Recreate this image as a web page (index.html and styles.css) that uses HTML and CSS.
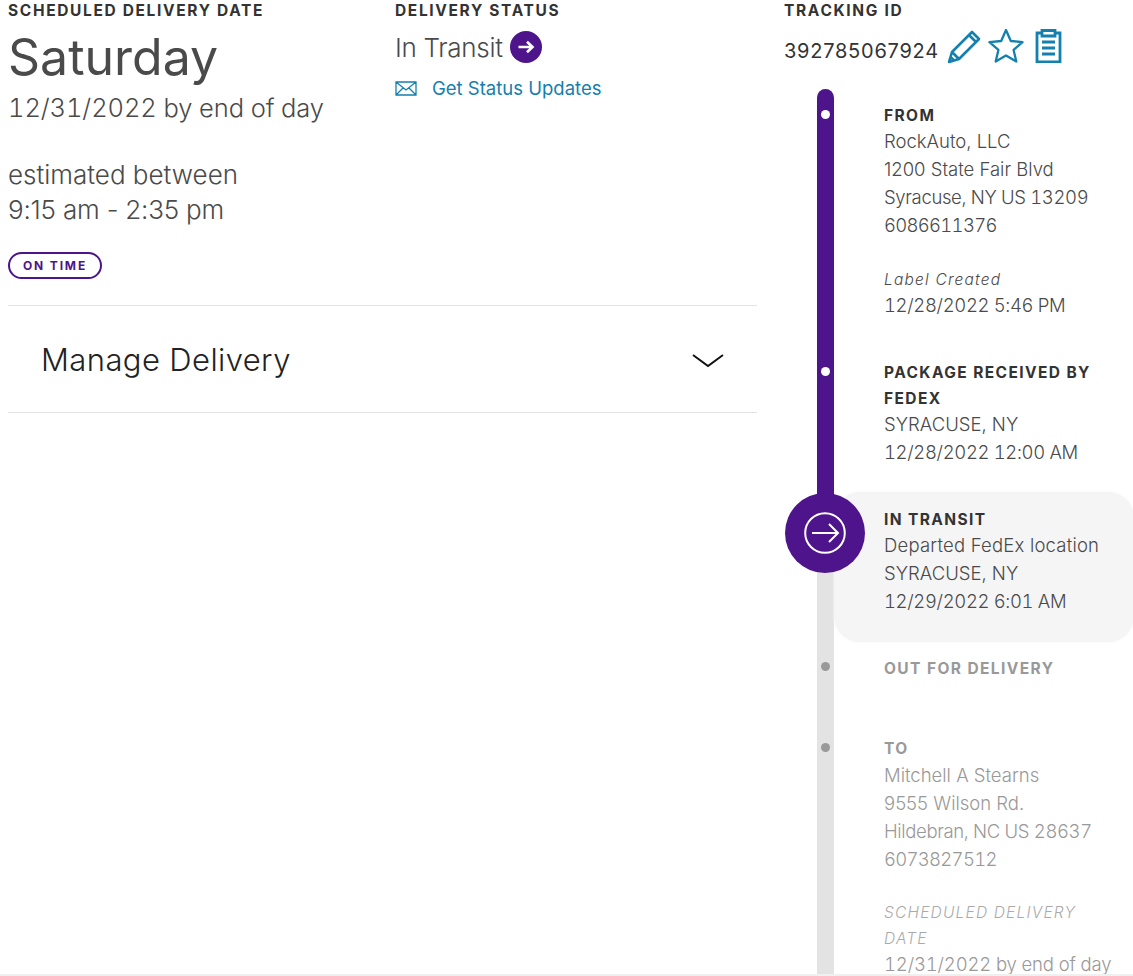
FILE: index.html
```html
<!DOCTYPE html>
<html lang="en">
<head>
<meta charset="utf-8">
<title>Tracking</title>
<link rel="stylesheet" href="styles.css">
</head>
<body>
<main class="page">
  <section class="summary">
    <div class="summary-top">
      <div class="col-date">
        <h2 class="label">SCHEDULED DELIVERY DATE</h2>
        <div class="day">Saturday</div>
        <div class="date">12/31/2022 by end of day</div>
        <div class="estimate">estimated between<br><span class="times">9:15 am - 2:35 pm</span></div>
        <span class="pill">ON TIME</span>
      </div>
      <div class="col-status">
        <h2 class="label">DELIVERY STATUS</h2>
        <div class="status-row">
          <span class="status-text">In Transit</span>
          <svg class="status-icon" viewBox="0 0 32 32"><circle cx="16" cy="16" r="16" fill="#4d148c"/><path d="M8.500 16H22M17 10.800L22.500 16L17 21.200" fill="none" stroke="#fff" stroke-width="2.600"/></svg>
        </div>
        <a class="updates" href="#">
          <svg class="mail" viewBox="0 0 22 15"><path d="M1 1h20v13H1zM1 1l10 8 10-8M1 14l7.500-7.500M21 14l-7.500-7.500" fill="none" stroke="#1380ad" stroke-width="1.300"/></svg>
          <span>Get Status Updates</span>
        </a>
      </div>
    </div>
    <div class="manage">
      <span>Manage Delivery</span>
      <svg class="chevron" viewBox="0 0 32 14"><path d="M1 1l15 11L31 1" fill="none" stroke="#111" stroke-width="2"/></svg>
    </div>
  </section>

  <aside class="tracking">
    <h2 class="label">TRACKING ID</h2>
    <div class="id-row">
      <span class="id">392785067924</span>
      <svg class="tool pencil" viewBox="0 0 36 36"><path d="M2 34l3-10L25 4l7 7-20 20zM5 24l7 7M22 7l7 7M3.500 29l3.500 3.500" fill="none" stroke="#1380ad" stroke-width="2.600" stroke-linejoin="round"/></svg>
      <svg class="tool star" viewBox="0 0 36 36"><path d="M18 2l4.800 11 11.700 1.100-8.900 7.800 2.700 11.600L18 27.400 7.700 33.500l2.700-11.600-8.900-7.800L13.200 13z" fill="none" stroke="#1380ad" stroke-width="2.300" stroke-linejoin="round"/></svg>
      <svg class="tool clip" viewBox="0 0 27 34"><path d="M7 4H2v29h23V4h-5M7 1.500h13V7H7zM7 13h13M7 19h13M7 25h13" fill="none" stroke="#1380ad" stroke-width="2.800"/></svg>
    </div>
    <div class="timeline">
      <div class="rail"><div class="rail-done"></div></div>
      <div class="step step-from">
        <i class="dot"></i>
        <h3 class="step-title">FROM</h3>
        <p>RockAuto, LLC</p><p>1200 State Fair Blvd</p><p class="num">Syracuse, NY US 13209</p><p class="num phone">6086611376</p>
        <h4 class="step-note">Label Created</h4>
        <p class="num">12/28/2022 5:46 PM</p>
      </div>
      <div class="step step-received">
        <i class="dot"></i>
        <h3 class="step-title">PACKAGE RECEIVED BY FEDEX</h3>
        <p>SYRACUSE, NY</p><p class="num">12/28/2022 12:00 AM</p>
      </div>
      <div class="step step-current">
        <span class="big-dot"><svg viewBox="0 0 42 42"><circle cx="21" cy="21" r="19.800" fill="none" stroke="#fff" stroke-width="2"/><path d="M8 21h26M25 12l9 9-9 9" fill="none" stroke="#fff" stroke-width="2"/></svg></span>
        <h3 class="step-title">IN TRANSIT</h3>
        <p class="wide">Departed FedEx location</p><p>SYRACUSE, NY</p><p class="num">12/29/2022 6:01 AM</p>
      </div>
      <div class="step step-out future">
        <i class="dot"></i>
        <h3 class="step-title">OUT FOR DELIVERY</h3>
      </div>
      <div class="step step-to future">
        <i class="dot"></i>
        <h3 class="step-title">TO</h3>
        <p>Mitchell A Stearns</p><p>9555 Wilson Rd.</p><p class="num">Hildebran, NC US 28637</p><p class="num phone">6073827512</p>
        <h4 class="step-note">SCHEDULED DELIVERY DATE</h4>
        <p class="num last">12/31/2022 by end of day</p>
      </div>
    </div>
  </aside>
</main>
<div class="bottom-edge"></div>
</body>
</html>
```
FILE: styles.css
```css
* { box-sizing: border-box; }
html, body { height: 976px; overflow: hidden; }
body {
  margin: 0;
  background: #fff;
  color: #333;
  font-family: Inter, "Liberation Sans", sans-serif;
  font-weight: 300;
}
.page { display: flex; padding: 0 0 0 8px; }
.summary { width: 749px; flex: none; }
.summary-top { display: flex; height: 306px; border-bottom: 1px solid #e3e3e3; }
.col-date { width: 387px; flex: none; }
.label {
  margin: 0;
  height: 21px;
  font-size: 15.500px;
  line-height: 21px;
  font-weight: 700;
  letter-spacing: 1.650px;
  color: #333;
}
.day { font-size: 50px; line-height: 60px; margin-top: 6px; color: #4a4a4a; font-weight: 400; }
.date { font-size: 25.500px; line-height: 40px; margin-top: 1px; color: #4a4a4a; letter-spacing: -0.100px; font-variant-numeric: tabular-nums; }
.estimate { font-size: 26px; line-height: 35px; margin-top: 29px; color: #4a4a4a; }
.times { letter-spacing: -0.200px; }
.pill {
  display: inline-flex;
  align-items: center;
  margin-top: 25px;
  height: 27px;
  padding: 0 13px;
  border: 2px solid #4d148c;
  border-radius: 14px;
  color: #4d148c;
  font-size: 12px;
  font-weight: 700;
  letter-spacing: 1.850px;
}
.status-row { display: flex; align-items: center; height: 34px; gap: 7px; margin-top: 9px; }
.status-text { font-size: 26px; color: #4a4a4a; letter-spacing: -0.300px; }
.status-icon { width: 32px; height: 32px; flex: none; }
.updates { display: flex; align-items: center; gap: 15px; margin-top: 10px; color: #1380ad; font-size: 18.500px; line-height: 28px; text-decoration: none; font-weight: 400; }
.mail { width: 22px; height: 15px; flex: none; }
.manage { display: flex; justify-content: space-between; align-items: center; height: 107px; padding: 0 33px; border-bottom: 1px solid #e3e3e3; font-size: 31px; color: #222; letter-spacing: 0.400px; }
.chevron { width: 32px; height: 14px; margin-top: 4px; }
.tracking { margin-left: 27px; width: 349px; flex: none; }
.id-row { display: flex; align-items: center; height: 48px; margin-top: 1px; }
.id { font-size: 20px; letter-spacing: 0.750px; color: #333; font-weight: 400; margin-right: 8px; padding-top: 10px; }
.tool { flex: none; }
.pencil { width: 36px; height: 36px; }
.star { width: 36px; height: 36px; margin-left: 5px; }
.clip { width: 27px; height: 34px; margin-left: 11px; }
.timeline { position: relative; margin-top: 19px; height: 900px; }
.rail { position: absolute; left: 33px; top: 0; width: 17px; height: 900px; background: #e3e3e3; border-radius: 9px 9px 0 0; overflow: hidden; }
.rail-done { height: 420px; background: #4d148c; }
.step { position: relative; padding-left: 100px; padding-right: 18px; }
.step p { margin: 0; font-size: 18.500px; line-height: 28px; color: #4a4a4a; }
.step p.num { font-variant-numeric: tabular-nums; letter-spacing: -0.350px; }
.step p.phone { letter-spacing: -0.700px; }
.step p.last { letter-spacing: -0.150px; }
.step p.wide { letter-spacing: 0.200px; }
.step-title { margin: 0 0 -2px; font-size: 15.500px; line-height: 26px; font-weight: 700; letter-spacing: 1.400px; color: #333; }
.step-note { margin: 28px 0 -2px; font-size: 15.500px; line-height: 26px; font-weight: 300; font-style: italic; letter-spacing: 1.200px; color: #4a4a4a; }
.dot { position: absolute; left: 37px; top: 21px; width: 9px; height: 9px; border-radius: 50%; background: #fff; }
.step-from { padding-top: 14px; height: 270px; }
.step-received { height: 133px; padding-top: 1px; }
.step-received .dot { top: 8px; }
.step-current { height: 150px; margin-right: -1px; margin-left: 50px; padding: 15px 0 0 50px; background: #f5f5f5; border-radius: 26px; box-shadow: 0 0 3px #f5f5f5; }
.big-dot { position: absolute; left: -49px; top: 1px; width: 80px; height: 80px; border-radius: 50%; background: #4d148c; display: flex; align-items: center; justify-content: center; }
.big-dot svg { width: 42px; height: 42px; }
.step-out { height: 94px; padding-top: 14px; }
.future .step-title, .step.future p, .future .step-note { color: #999; }
.future .dot { background: #999; top: 20px; }
.step-to .step-title { margin-bottom: -1px; }
.future .step-note { margin-top: 27px; color: #aaa; }
.step-to .dot { top: 7px; }
.bottom-edge { position: absolute; left: 0; right: 0; top: 974px; height: 2px; background: #f0f0f0; }
```
